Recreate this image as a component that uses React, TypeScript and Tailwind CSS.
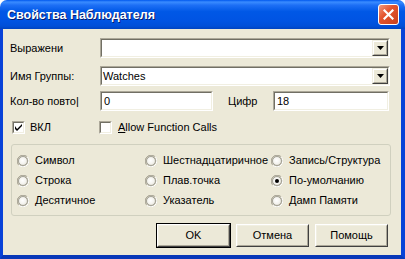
import React from "react";

function Sunken({ className = "", children }: { className?: string; children?: React.ReactNode }) {
  return (
    <div className={`border border-t-[#ACA899] border-l-[#ACA899] border-b-white border-r-white ${className}`}>
      <div className="h-full w-full border border-t-[#716F64] border-l-[#716F64] border-b-[#F1EFE2] border-r-[#F1EFE2] bg-white flex items-center">
        {children}
      </div>
    </div>
  );
}

function Combo({ value, width }: { value: string; width: string }) {
  return (
    <Sunken className={`h-[20px] ${width}`}>
      <div className="flex-1 pl-[1px] leading-none">{value}</div>
      <div className="h-full w-[16px] border border-t-[#F1EFE2] border-l-[#F1EFE2] border-b-[#404040] border-r-[#404040] bg-[#ECE9D8]">
        <div className="h-full w-full border border-t-white border-l-white border-b-[#ACA899] border-r-[#ACA899] flex items-center justify-center">
          <svg width="7" height="4" viewBox="0 0 7 4">
            <path d="M0 0h7L3.5 4z" fill="#000" />
          </svg>
        </div>
      </div>
    </Sunken>
  );
}

function Edit({ value, width }: { value: string; width: string }) {
  return (
    <Sunken className={`h-[20px] ${width}`}>
      <div className="flex-1 pl-[2px] leading-none">{value}</div>
    </Sunken>
  );
}

function Check({ checked }: { checked: boolean }) {
  return (
    <div className="w-[13px] h-[13px] border border-t-[#ACA899] border-l-[#ACA899] border-b-white border-r-white">
      <div className="w-full h-full border border-t-[#716F64] border-l-[#716F64] border-b-[#F1EFE2] border-r-[#F1EFE2] bg-white flex items-center justify-center">
        {checked && (
          <svg width="7" height="7" viewBox="0 0 7 7">
            <path d="M0 2v3l2 2L7 2V0L2 5z" fill="#000" />
          </svg>
        )}
      </div>
    </div>
  );
}

function Radio({ checked }: { checked: boolean }) {
  return (
    <svg width="12" height="12" viewBox="0 0 12 12" className="shrink-0">
      <defs>
        <radialGradient id="rg" cx="0.45" cy="0.45" r="0.6">
          <stop offset="0" stopColor="#ffffff" />
          <stop offset="0.6" stopColor="#f4f3ee" />
          <stop offset="1" stopColor="#dcd9cd" />
        </radialGradient>
      </defs>
      <path d="M10.24 1.76A6 6 0 0 0 1.76 10.24" stroke="#ACA899" strokeWidth="1" fill="none" />
      <circle cx="6" cy="6" r="5.5" fill="none" stroke="#ACA899" strokeWidth="0.8" />
      <path d="M1.76 10.24A6 6 0 0 0 10.24 1.76" stroke="#ffffff" strokeWidth="1" fill="none" />
      <circle cx="6" cy="6" r="4.5" fill="url(#rg)" stroke="#716F64" strokeWidth="0.6" />
      {checked && <circle cx="6" cy="6" r="2" fill="#000" />}
    </svg>
  );
}

function RadioItem({ label, checked = false, width }: { label: string; checked?: boolean; width: string }) {
  return (
    <div className={`flex items-center gap-[6px] ${width}`}>
      <Radio checked={checked} />
      <span className="leading-none">{label}</span>
    </div>
  );
}

function Button({ label, def = false }: { label: string; def?: boolean }) {
  return (
    <div className={`w-[75px] h-[25px] ${def ? "border border-black" : "border border-transparent"}`}>
      <div className="w-full h-full border border-t-white border-l-white border-b-[#404040] border-r-[#404040] bg-[#ECE9D8]">
        <div className="w-full h-full border border-t-[#F1EFE2] border-l-[#F1EFE2] border-b-[#ACA899] border-r-[#ACA899] flex items-center justify-center leading-none font-normal">
          {label}
        </div>
      </div>
    </div>
  );
}

export default function App() {
  return (
    <div className="w-[405px] h-[259px] flex flex-col font-['Liberation_Sans',Arial,sans-serif] text-[11px] text-black">
      <div className="h-[29px] shrink-0 rounded-t-[7px] flex items-center justify-between pl-[7px] pr-[6px] bg-[linear-gradient(180deg,#0058ee_0%,#3a8cff_7%,#1d6ff5_18%,#0058e6_40%,#0054e3_70%,#004fd8_90%,#0043c0_100%)]">
        <span className="text-white font-bold text-[12.5px] [text-shadow:1px_1px_0_#0a1c6a] pt-[1px]">
          Свойства Наблюдателя
        </span>
        <div className="w-[21px] h-[21px] rounded-[3px] border border-white bg-[linear-gradient(135deg,#f09a80_0%,#e4552f_40%,#c9401c_100%)] flex items-center justify-center">
          <svg width="11" height="11" viewBox="0 0 11 11">
            <path d="M1.5 1.5L9.5 9.5M9.5 1.5L1.5 9.5" stroke="#fff" strokeWidth="2.2" strokeLinecap="square" />
          </svg>
        </div>
      </div>
      <div className="flex-1 flex flex-col bg-[#ECE9D8] border-l-[3px] border-r-[4px] border-b-[4px] border-l-[#0842d8] border-r-[#0842d8] border-b-[#0838b8] pl-[7px] pt-[9px]">
        <div className="flex items-center h-[20px]">
          <div className="w-[90px]">Выражени</div>
          <Combo value="" width="w-[290px]" />
        </div>
        <div className="flex items-center h-[20px] mt-[8px]">
          <div className="w-[90px]">Имя Группы:</div>
          <Combo value="Watches" width="w-[290px]" />
        </div>
        <div className="flex items-center h-[20px] mt-[5px]">
          <div className="w-[90px] overflow-hidden whitespace-nowrap pr-[1px]">
            <span>Кол-во повто</span>
            <span>|</span>
          </div>
          <Edit value="0" width="w-[113px]" />
          <div className="w-[45px] ml-[15px]">Цифр</div>
          <Edit value="18" width="w-[116px]" />
        </div>
        <div className="flex items-center h-[13px] mt-[10px]">
          <div className="ml-[2px] w-[88px] flex items-center gap-[5px]">
            <Check checked />
            <span className="leading-none">ВКЛ</span>
          </div>
          <div className="flex items-center gap-[6px] ml-[-1px]">
            <Check checked={false} />
            <span className="leading-none">
              <span className="underline">A</span>llow Function Calls
            </span>
          </div>
        </div>
        <div className="ml-[1px] mt-[10px] w-[380px] h-[72px] border border-[#D0D0BF] rounded-[3px] flex flex-col justify-center gap-[8px] pl-[5px] pt-[1px]">
          <div className="flex items-center h-[12px]">
            <RadioItem label="Символ" width="w-[128px]" />
            <RadioItem label="Шестнадцатиричное" width="w-[126px]" />
            <RadioItem label="Запись/Структура" width="w-[110px]" />
          </div>
          <div className="flex items-center h-[12px]">
            <RadioItem label="Строка" width="w-[128px]" />
            <RadioItem label="Плав.точка" width="w-[126px]" />
            <RadioItem label="По-умолчанию" checked width="w-[110px]" />
          </div>
          <div className="flex items-center h-[12px]">
            <RadioItem label="Десятичное" width="w-[128px]" />
            <RadioItem label="Указатель" width="w-[126px]" />
            <RadioItem label="Дамп Памяти" width="w-[110px]" />
          </div>
        </div>
        <div className="flex justify-end gap-[4px] mt-[7px] pr-[12px]">
          <Button label="OK" def />
          <Button label="Отмена" />
          <Button label="Помощь" />
        </div>
      </div>
    </div>
  );
}
